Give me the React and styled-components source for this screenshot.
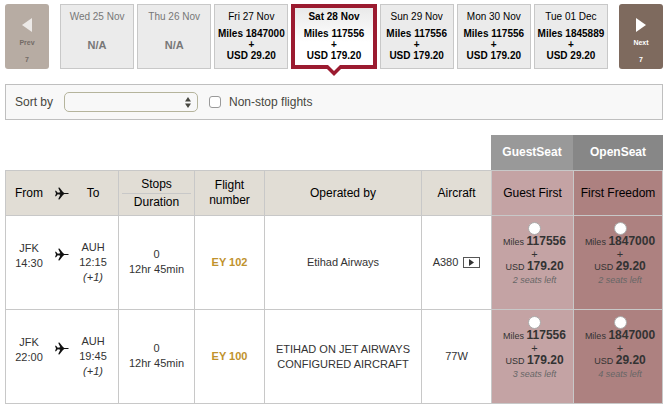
import React from "react";
import styled, { createGlobalStyle } from "styled-components";

const GlobalStyle = createGlobalStyle`
  *, *::before, *::after { box-sizing: border-box; }
  body {
    margin: 0;
    background: #fff;
    color: #333;
    font-family: "Liberation Sans", Arial, sans-serif;
    font-size: 11px;
    line-height: 15px;
  }
  button, select, input { font: inherit; color: inherit; margin: 0; }
`;

const Page = styled.main`
  padding: 4px 5px 0;
`;

const DateBar = styled.nav`
  display: flex;
  align-items: stretch;
  gap: 11px;
  height: 65px;
`;

const PageButton = styled.button`
  flex: 0 0 44px;
  display: flex;
  flex-direction: column;
  align-items: center;
  padding: 14px 0 0;
  border: 0;
  border-radius: 3px;
  background: ${(p) => (p.$muted ? "#b7aca3" : "#7e6a5e")};
  color: ${(p) => (p.$muted ? "#736b66" : "#fff")};
  font-size: 7px;
  font-weight: bold;
  line-height: 17px;
`;

const Arrow = styled.svg`
  display: block;
  width: 12px;
  height: 14px;
  margin-bottom: 2px;
  fill: ${(p) => (p.$muted ? "#ece9e7" : "#fff")};
`;

const Days = styled.div`
  flex: 1;
  display: grid;
  grid-template-columns: 74fr 74fr 74fr 85fr 74fr 74fr 74fr;
  gap: 3px;
`;

const Day = styled.button`
  position: relative;
  display: flex;
  flex-direction: column;
  align-items: center;
  min-width: 0;
  padding: ${(p) => (p.$selected ? "3px 0 0" : "6px 0 0")};
  border: ${(p) => (p.$selected ? "4px solid #9b1b30" : "1px solid #c8c8c8")};
  background: ${(p) => (p.$selected ? "linear-gradient(#e9e9e9, #fff 60%)" : "#ebebeb")};
  color: ${(p) => (p.$muted ? "#777" : "#000")};
  font-size: 10px;
  line-height: 12px;
  white-space: nowrap;
`;

const DayName = styled.span`
  font-weight: ${(p) => (p.$selected ? "bold" : "normal")};
  margin-bottom: 5px;
`;

const DayFare = styled.span`
  display: flex;
  flex-direction: column;
  align-items: center;
  font-weight: bold;
  line-height: 11px;
`;

const NotAvailable = styled.span`
  padding-top: 11px;
  font-size: 11px;
  font-weight: bold;
`;

const Pointer = styled.svg`
  position: absolute;
  left: 50%;
  top: 100%;
  width: 18px;
  height: 12px;
  transform: translateX(-50%);
`;

const FilterBar = styled.form`
  display: flex;
  align-items: center;
  height: 36px;
  margin: 15px 0;
  padding: 0 9px;
  border: 1px solid #bfbfbf;
  background: #f8f8f8;
  color: #474740;
  font-size: 12px;
`;

const SelectWrap = styled.span`
  position: relative;
  display: flex;
  margin: 0 11px;
`;

const SortSelect = styled.select`
  appearance: none;
  width: 134px;
  height: 20px;
  border: 1px solid #b5b49c;
  border-radius: 5px;
  background: #f8f8f8;
`;

const SelectArrows = styled.svg`
  position: absolute;
  right: 7px;
  top: 5px;
  width: 6px;
  height: 11px;
  fill: #474740;
  pointer-events: none;
`;

const Tick = styled.input`
  appearance: none;
  width: 12px;
  height: 12px;
  margin-right: 8px;
  border: 1px solid #9a9a9a;
  border-radius: 3px;
  background: #fff;
  &:checked { background: #474740; }
`;

const CheckLabel = styled.label`
  display: flex;
  align-items: center;
`;

const Flights = styled.table`
  width: 100%;
  table-layout: fixed;
  border-collapse: separate;
  border-spacing: 0;
  text-align: center;
`;

const Col = styled.col`
  width: ${(p) => (p.$w ? p.$w + "px" : "auto")};
`;

const seatTone = { guest: "#c4a3a4", open: "#ad8180" };

const FareTab = styled.th`
  height: 35px;
  padding: 0;
  background: ${(p) => p.$bg};
  color: #fff;
  font-size: 12px;
`;

const HeadCell = styled.th`
  height: 45px;
  padding: 0;
  border: 0 solid #c8c8c8;
  border-width: 1px 0 0 1px;
  background: ${(p) => seatTone[p.$tone] || "#e1ddd5"};
  color: #000;
  font-size: 12px;
  font-weight: normal;
  &:last-child { border-right-width: 1px; }
`;

const Cell = styled.td`
  height: 94px;
  padding: 0;
  border: 0 solid #c8c8c8;
  border-width: 1px 0 0 1px;
  background: ${(p) => seatTone[p.$tone] || "#fff"};
  vertical-align: ${(p) => (p.$tone ? "top" : "middle")};
  &:last-child { border-right-width: 1px; }
  tr:last-child > & { height: 95px; border-bottom-width: 1px; }
`;

const Route = styled.div`
  display: grid;
  grid-template-columns: 46fr 20fr 42fr;
  align-items: start;
  padding-right: 4px;
`;

const Departure = styled.span`
  padding-top: 1px;
`;

const PlaneIcon = styled.svg`
  width: 14px;
  height: 13px;
  margin: ${(p) => (p.$low ? "8px auto 0" : "1px auto 0")};
  fill: #111;
`;

const Stacked = styled.div`
  margin: 0 3px;
  line-height: 17px;
  span { display: block; }
  span:first-child { border-bottom: 1px solid #c8c8c8; }
`;

const StopCell = styled.div`
  padding-bottom: 1px;
`;

const FlightLink = styled.a`
  color: #bf922d;
  font-weight: bold;
  text-decoration: none;
`;

const AircraftCell = styled.span`
  display: flex;
  align-items: center;
  justify-content: center;
  gap: 5px;
`;

const PreviewButton = styled.button`
  display: flex;
  align-items: center;
  justify-content: center;
  width: 17px;
  height: 11px;
  padding: 0;
  border: 1px solid #555;
  background: #fff;
`;

const Fare = styled.label`
  display: flex;
  flex-direction: column;
  align-items: center;
  padding: 6px 0 0 4px;
  line-height: 12px;
`;

const Radio = styled.input`
  appearance: none;
  width: 13px;
  height: 13px;
  border: 1px solid #aaa;
  border-radius: 50%;
  background: #fff;
  &:checked { background: radial-gradient(#333 35%, #fff 40%); }
`;

const Amount = styled.span`
  font-size: 9px;
  white-space: nowrap;
  b { font-size: 12px; }
`;

const SeatsLeft = styled.em`
  margin-top: 1px;
  color: #666;
  font-size: 9px;
`;

const days = [
  { name: "Wed 25 Nov" },
  { name: "Thu 26 Nov" },
  { name: "Fri 27 Nov", miles: "1847000", usd: "29.20" },
  { name: "Sat 28 Nov", miles: "117556", usd: "179.20", selected: true },
  { name: "Sun 29 Nov", miles: "117556", usd: "179.20" },
  { name: "Mon 30 Nov", miles: "117556", usd: "179.20" },
  { name: "Tue 01 Dec", miles: "1845889", usd: "29.20" },
];

const flights = [
  {
    number: "EY 102", departs: "14:30", arrives: "12:15",
    operator: ["Etihad Airways"], aircraft: "A380", preview: true,
    guestLeft: 2, openLeft: 2,
  },
  {
    number: "EY 100", departs: "22:00", arrives: "19:45",
    operator: ["ETIHAD ON JET AIRWAYS", "CONFIGURED AIRCRAFT"], aircraft: "77W",
    guestLeft: 3, openLeft: 4,
  },
];

function Plane({ low }) {
  return (
    <PlaneIcon $low={low} viewBox="0 0 14 13" aria-hidden="true">
      <path d="M14 6.5 13 7H9.3L8 8 4.4 12.6 3.2 12.3 5.3 7.8 2.8 7.2 1 9.3 0 9.2 1 6.5 0 3.8 1 3.7 2.8 5.8 5.3 5.2 3.2.7 4.4.4 8 5 9.3 6H13Z" />
    </PlaneIcon>
  );
}

function FareOption({ flight, label, miles, usd, left }) {
  return (
    <Fare>
      <Radio type="radio" name="fare" aria-label={`${flight} ${label}`} />
      <Amount>Miles <b>{miles}</b></Amount>
      <span>+</span>
      <Amount>USD <b>{usd}</b></Amount>
      <SeatsLeft>{left} seats left</SeatsLeft>
    </Fare>
  );
}

export default function App() {
  return (
    <>
      <GlobalStyle />
      <Page>
        <DateBar>
          <PageButton type="button" $muted>
            <Arrow $muted viewBox="0 0 12 14" aria-hidden="true"><path d="M11 0v14L1 7z" /></Arrow>
            <span>Prev</span>
            <span>7</span>
          </PageButton>
          <Days>
            {days.map((d) => (
              <Day key={d.name} type="button" $selected={d.selected} $muted={!d.miles}>
                <DayName $selected={d.selected}>{d.name}</DayName>
                {d.miles ? (
                  <DayFare>
                    <span>Miles {d.miles}</span>
                    <span>+</span>
                    <span>USD {d.usd}</span>
                  </DayFare>
                ) : (
                  <NotAvailable>N/A</NotAvailable>
                )}
                {d.selected && (
                  <Pointer viewBox="0 0 18 12" aria-hidden="true">
                    <path d="M2 0h14v4L9 11 2 4z" fill="#9b1b30" />
                    <path d="M3 0h12L9 6z" fill="#fff" />
                  </Pointer>
                )}
              </Day>
            ))}
          </Days>
          <PageButton type="button">
            <Arrow viewBox="0 0 12 14" aria-hidden="true"><path d="M1 0v14l10-7z" /></Arrow>
            <span>Next</span>
            <span>7</span>
          </PageButton>
        </DateBar>

        <FilterBar>
          <label htmlFor="sort">Sort by</label>
          <SelectWrap>
            <SortSelect id="sort" />
            <SelectArrows viewBox="0 0 6 11" aria-hidden="true">
              <path d="M0 4.5 3 0l3 4.5zM0 6.5h6L3 11z" />
            </SelectArrows>
          </SelectWrap>
          <CheckLabel>
            <Tick type="checkbox" />
            Non-stop flights
          </CheckLabel>
        </FilterBar>

        <Flights>
          <colgroup>
            <Col $w={113} />
            <Col $w={76} />
            <Col $w={70} />
            <Col />
            <Col $w={70} />
            <Col $w={82} />
            <Col $w={90} />
          </colgroup>
          <thead>
            <tr>
              <td colSpan={5} />
              <FareTab $bg="#999">GuestSeat</FareTab>
              <FareTab $bg="#878787">OpenSeat</FareTab>
            </tr>
            <tr>
              <HeadCell>
                <Route>
                  <span>From</span>
                  <Plane />
                  <span>To</span>
                </Route>
              </HeadCell>
              <HeadCell>
                <Stacked><span>Stops</span><span>Duration</span></Stacked>
              </HeadCell>
              <HeadCell>Flight<br />number</HeadCell>
              <HeadCell>Operated by</HeadCell>
              <HeadCell>Aircraft</HeadCell>
              <HeadCell $tone="guest">Guest First</HeadCell>
              <HeadCell $tone="open">First Freedom</HeadCell>
            </tr>
          </thead>
          <tbody>
            {flights.map((f) => (
              <tr key={f.number}>
                <Cell>
                  <Route>
                    <Departure>JFK<br />{f.departs}</Departure>
                    <Plane low />
                    <span>AUH<br />{f.arrives}<br /><em>(+1)</em></span>
                  </Route>
                </Cell>
                <Cell><StopCell>0<br />12hr 45min</StopCell></Cell>
                <Cell><FlightLink href="#">{f.number}</FlightLink></Cell>
                <Cell>
                  {f.operator.map((line) => <div key={line}>{line}</div>)}
                </Cell>
                <Cell>
                  <AircraftCell>
                    {f.aircraft}
                    {f.preview && (
                      <PreviewButton type="button" aria-label="View aircraft">
                        <svg width="5" height="7" viewBox="0 0 5 7"><path d="M0 0v7l5-3.5z" fill="#333" /></svg>
                      </PreviewButton>
                    )}
                  </AircraftCell>
                </Cell>
                <Cell $tone="guest">
                  <FareOption flight={f.number} label="Guest First" miles="117556" usd="179.20" left={f.guestLeft} />
                </Cell>
                <Cell $tone="open">
                  <FareOption flight={f.number} label="First Freedom" miles="1847000" usd="29.20" left={f.openLeft} />
                </Cell>
              </tr>
            ))}
          </tbody>
        </Flights>
      </Page>
    </>
  );
}
